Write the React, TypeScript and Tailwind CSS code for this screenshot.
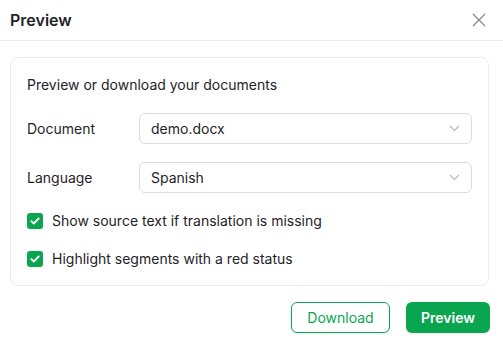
import React from "react";

function Chevron() {
  return (
    <svg width="11" height="7" viewBox="0 0 11 7" fill="none" className="shrink-0">
      <path d="M1 1l4.5 4.5L10 1" stroke="#b8b8b8" strokeWidth="1.1" />
    </svg>
  );
}

function Check() {
  return (
    <span className="flex h-4 w-4 shrink-0 items-center justify-center rounded-[3px] bg-[#0aa64f]">
      <svg width="10" height="8" viewBox="0 0 10 8" fill="none">
        <path d="M1.3 4.1l2.5 2.4L8.7 1.5" stroke="white" strokeWidth="1.8" strokeLinecap="round" strokeLinejoin="round" />
      </svg>
    </span>
  );
}

function SelectRow({ label, value }: { label: string; value: string }) {
  return (
    <div className="flex items-center">
      <div className="w-[112px] shrink-0 text-[14px] text-[#1f2328]">{label}</div>
      <div className="flex h-[31px] flex-1 items-center justify-between rounded-[6px] border border-[#dcdcdc] bg-white pl-[11px] pr-[11px]">
        <span className="text-[14px] text-[#1f2328]">{value}</span>
        <Chevron />
      </div>
    </div>
  );
}

export default function App() {
  return (
    <div
      className="h-[347px] w-[503px] overflow-hidden bg-white"
      style={{ fontFamily: "Inter, 'Noto Sans', sans-serif" }}
    >
      <div className="flex h-[41px] items-center justify-between border-b border-[#ececec] pl-[10px] pr-[17px]">
        <span className="text-[16px] font-semibold text-[#1f2328]">Preview</span>
        <svg width="14" height="14" viewBox="0 0 14 14" fill="none">
          <path d="M1 1l12 12M13 1L1 13" stroke="#8a8a8a" strokeWidth="1.3" />
        </svg>
      </div>
      <div className="pl-[10px] pr-[14px] pt-[16px]">
        <div className="flex flex-col gap-[18px] rounded-[8px] border border-[#ececec] p-[16px]">
          <div className="h-[21px] text-[14px] leading-[21px] text-[#1f2328]">Preview or download your documents</div>
          <SelectRow label="Document" value="demo.docx" />
          <SelectRow label="Language" value="Spanish" />
          <div className="flex items-center gap-[9px] leading-5">
            <Check />
            <span className="text-[14px] text-[#1f2328]">Show source text if translation is missing</span>
          </div>
          <div className="flex items-center gap-[9px] leading-5">
            <Check />
            <span className="text-[14px] text-[#1f2328]">Highlight segments with a red status</span>
          </div>
        </div>
        <div className="mt-[16px] flex justify-end gap-[16px]">
          <button className="h-[31px] w-[99px] rounded-[6px] border border-[#0aa64f] bg-white text-[14px] font-normal text-[#0aa64f] shadow-[0_2px_0_rgba(0,0,0,0.03)]">
            Download
          </button>
          <button className="mr-[-1px] h-[31px] w-[84px] rounded-[6px] bg-[#0aa64f] text-[14px] font-semibold text-white shadow-[0_2px_0_rgba(0,0,0,0.04)]">
            Preview
          </button>
        </div>
      </div>
    </div>
  );
}
